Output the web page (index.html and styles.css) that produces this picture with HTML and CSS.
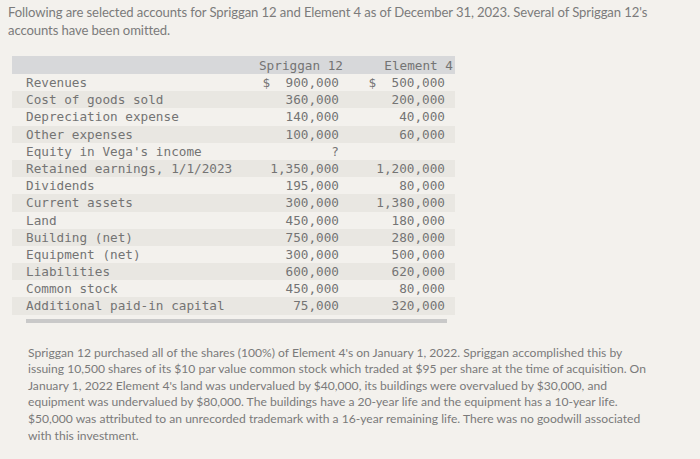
FILE: index.html
```html
<!DOCTYPE html>
<html>
<head>
<meta charset="utf-8">
<link rel="stylesheet" href="styles.css">
</head>
<body>
<p class="intro">Following are selected accounts for Spriggan 12 and Element 4 as of December 31, 2023. Several of Spriggan 12's accounts have been omitted.</p>
<div class="table">
  <div class="row head"><span class="lab"></span><span class="v1">Spriggan 12</span><span class="v2">Element 4</span></div>
  <div class="row"><span class="lab">Revenues</span><span class="v1">$  900,000</span><span class="v2">$  500,000</span></div>
  <div class="row alt"><span class="lab">Cost of goods sold</span><span class="v1">360,000</span><span class="v2">200,000</span></div>
  <div class="row"><span class="lab">Depreciation expense</span><span class="v1">140,000</span><span class="v2">40,000</span></div>
  <div class="row alt"><span class="lab">Other expenses</span><span class="v1">100,000</span><span class="v2">60,000</span></div>
  <div class="row"><span class="lab">Equity in Vega's income</span><span class="v1">?</span><span class="v2"></span></div>
  <div class="row alt"><span class="lab">Retained earnings, 1/1/2023</span><span class="v1">1,350,000</span><span class="v2">1,200,000</span></div>
  <div class="row"><span class="lab">Dividends</span><span class="v1">195,000</span><span class="v2">80,000</span></div>
  <div class="row alt"><span class="lab">Current assets</span><span class="v1">300,000</span><span class="v2">1,380,000</span></div>
  <div class="row"><span class="lab">Land</span><span class="v1">450,000</span><span class="v2">180,000</span></div>
  <div class="row alt"><span class="lab">Building (net)</span><span class="v1">750,000</span><span class="v2">280,000</span></div>
  <div class="row"><span class="lab">Equipment (net)</span><span class="v1">300,000</span><span class="v2">500,000</span></div>
  <div class="row alt"><span class="lab">Liabilities</span><span class="v1">600,000</span><span class="v2">620,000</span></div>
  <div class="row"><span class="lab">Common stock</span><span class="v1">450,000</span><span class="v2">80,000</span></div>
  <div class="row alt"><span class="lab">Additional paid-in capital</span><span class="v1">75,000</span><span class="v2">320,000</span></div>
  <div class="endbar"></div>
</div>
<p class="story">Spriggan 12 purchased all of the shares (100%) of Element 4's on January 1, 2022. Spriggan accomplished this by issuing 10,500 shares of its $10 par value common stock which traded at $95 per share at the time of acquisition. On January 1, 2022 Element 4's land was undervalued by $40,000, its buildings were overvalued by $30,000, and equipment was undervalued by $80,000. The buildings have a 20-year life and the equipment has a 10-year life. $50,000 was attributed to an unrecorded trademark with a 16-year remaining life. There was no goodwill associated with this investment.</p>
</body>
</html>
```

FILE: styles.css
```css
html, body {
  margin: 0;
  padding: 0;
  background: #f3f1ed;
}
body {
  width: 700px;
  height: 459px;
  overflow: hidden;
  font-family: Lato, "Open Sans", sans-serif;
  color: #7b7b7b;
}
.intro {
  margin: 0;
  padding: 3px 40px 0 8px;
  font-size: 13.1px;
  line-height: 18px;
  letter-spacing: -0.1px;
}
.table {
  margin: 17px 0 0 12px;
  width: 443px;
  font-family: "DejaVu Sans Mono", monospace;
  font-size: 12.7px;
  color: #747474;
}
.row {
  display: grid;
  grid-template-columns: 237px 90px 116px;
  height: 17.2px;
  line-height: 17.2px;
}
.row.head {
  background: #d7d8da;
  height: 18px;
  line-height: 20px;
}
.row.alt {
  background: #e9e7e2;
}
.lab {
  padding-left: 14px;
  white-space: pre;
}
.v1, .v2 {
  text-align: right;
  white-space: pre;
}
.v2 {
  padding-right: 10px;
}
.head .v1 { margin-right: -4px; }
.head .v2 { padding-right: 2px; }
.endbar {
  margin: 4px 8px 0 14px;
  height: 4px;
  background: #c9c9c9;
}
.story {
  margin: 22px 0 0 28px;
  width: 622px;
  font-size: 12.1px;
  line-height: 16.6px;
  color: #7a7a7a;
}
```
